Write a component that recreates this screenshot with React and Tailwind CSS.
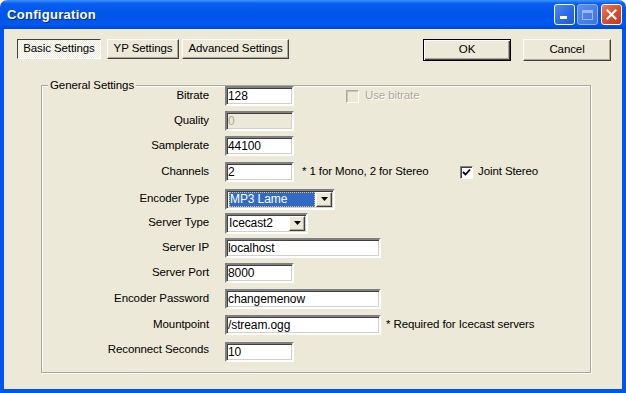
import React from 'react';

const font = { fontFamily: '"Liberation Sans", Arial, sans-serif' };

const raised =
  'border border-t-white border-l-white border-b-[#404040] border-r-[#404040] shadow-[inset_-1px_-1px_0_#aca899]';

const sunken =
  'border-2 border-t-[#808080] border-l-[#808080] border-b-white border-r-white shadow-[inset_1px_1px_0_#404040,inset_-1px_-1px_0_#d4d0c8]';

const TextBox = ({ value, width, disabled }) => (
  <div
    className={`${sunken} h-[20px] flex items-center pl-[1px] text-[12px] ${disabled ? 'bg-[#ece9d8] text-[#aca899]' : 'bg-white text-black'}`}
    style={{ width }}
  >
    <span className="leading-none">{value}</span>
  </div>
);

const Arrow = () => (
  <svg width="7" height="4" viewBox="0 0 7 4">
    <path d="M0 0h7L3.5 4z" fill="#000" />
  </svg>
);

const Select = ({ value, width, selected }) => (
  <div className={`${sunken} h-[21px] bg-white flex items-stretch p-[1px] text-[12px]`} style={{ width }}>
    <div className="flex-1 flex items-center pl-[1px]">
      {selected ? (
        <div className="h-full w-full bg-[#316ac5] text-white flex items-center pl-[1px] outline-1 outline-dotted outline-[#e8c35a] -outline-offset-1">
          {value}
        </div>
      ) : (
        <span>{value}</span>
      )}
    </div>
    <div className={`${raised} bg-[#ece9d8] w-[16px] ml-[1px] flex items-center justify-center`}>
      <Arrow />
    </div>
  </div>
);

const Row = ({ label, top, children, labelShift }) => (
  <div className="flex items-center h-[20px]" style={{ marginTop: top }}>
    <div className="w-[167px] text-right" style={labelShift ? { marginTop: labelShift } : undefined}>
      {label}
    </div>
    <div className="ml-[16px] flex items-center">{children}</div>
  </div>
);

const TitleButton = ({ kind }) => {
  if (kind === 'close') {
    return (
      <div className="w-[21px] h-[21px] rounded-[3px] border border-white bg-gradient-to-br from-[#e9775c] via-[#d9502f] to-[#c03a1c] flex items-center justify-center">
        <svg width="11" height="11" viewBox="0 0 11 11">
          <path d="M1.5 1.5l8 8M9.5 1.5l-8 8" stroke="#fff" strokeWidth="2.2" strokeLinecap="square" />
        </svg>
      </div>
    );
  }
  if (kind === 'max') {
    return (
      <div className="w-[21px] h-[21px] rounded-[3px] border border-[#8fb4f5] bg-gradient-to-br from-[#5a8ef0] to-[#3e72e3] flex items-center justify-center">
        <div className="w-[11px] h-[10px] border border-[#9cbaf2] border-t-[3px]" />
      </div>
    );
  }
  return (
    <div className="w-[21px] h-[21px] rounded-[3px] border border-white bg-gradient-to-br from-[#4a8cf6] via-[#2f6ce8] to-[#2258d8] flex items-end pb-[5px] pl-[5px]">
      <div className="w-[7px] h-[3px] bg-white" />
    </div>
  );
};

export default function App() {
  return (
    <div className="w-[626px] h-[393px] flex flex-col text-[11.5px] tracking-[-0.1px] text-black" style={font}>
      {/* title bar */}
      <div className="h-[29px] rounded-t-[7px] flex items-center pl-[7px] pr-[4px] bg-[linear-gradient(to_bottom,#3d95ff_0%,#0a5ff0_12%,#0055ea_45%,#0058f0_85%,#0046d5_100%)]">
        <span className="text-white font-bold text-[13px] tracking-[0.3px] [text-shadow:1px_1px_0_#0a2a80] mt-[1px]">
          Configuration
        </span>
        <div className="ml-auto flex items-center">
          <TitleButton kind="min" />
          <div className="ml-[2px]">
            <TitleButton kind="max" />
          </div>
          <div className="ml-[3px]">
            <TitleButton kind="close" />
          </div>
        </div>
      </div>

      {/* body */}
      <div className="flex-1 bg-[#ece9d8] border-l-[4px] border-r-[4px] border-b-[4px] border-[#0055ea] flex flex-col">
        <div className="flex items-start pt-[10px] pl-[13px]">
          <div className="flex">
            <div className="w-[84px] h-[20px] border border-t-[#404040] border-l-[#404040] border-b-white border-r-white bg-[repeating-conic-gradient(#fff_0%_25%,#ece9d8_0%_50%)] bg-[length:2px_2px] flex items-center justify-center">
              Basic Settings
            </div>
            <div className={`${raised} w-[72px] h-[20px] ml-[6px] flex items-center justify-center`}>YP Settings</div>
            <div className={`${raised} w-[107px] h-[20px] ml-[3px] flex items-center justify-center`}>
              Advanced Settings
            </div>
          </div>
          <div className="ml-[134px] w-[88px] h-[22px] border border-black shadow-[inset_1px_1px_0_#fff,inset_-1px_-1px_0_#404040,inset_-2px_-2px_0_#aca899] flex items-center justify-center">
            OK
          </div>
          <div className={`${raised} ml-[12px] w-[88px] h-[22px] flex items-center justify-center`}>Cancel</div>
        </div>

        {/* group box */}
        <div className="relative ml-[37px] mt-[24px] w-[550px] h-[288px] border border-[#aca899] shadow-[inset_1px_1px_0_#fff,1px_1px_0_#fff]">
          <span className="absolute -top-[8px] left-[6px] px-[2px] bg-[#ece9d8] leading-[14px]">General Settings</span>

          <Row label="Bitrate" top={0}>
            <TextBox value="128" width={69} />
            <div className="ml-[52px] flex items-center text-[#aca899] [text-shadow:1px_1px_0_#fff]">
              <div className="w-[13px] h-[13px] border border-t-[#aca899] border-l-[#aca899] border-b-white border-r-white bg-[#ece9d8] shadow-[inset_1px_1px_0_#cac6b5]" />
              <span className="ml-[6px]">Use bitrate</span>
            </div>
          </Row>
          <Row label="Quality" top={5}>
            <TextBox value="0" width={69} disabled />
          </Row>
          <Row label="Samplerate" top={5}>
            <TextBox value="44100" width={69} />
          </Row>
          <Row label="Channels" top={6}>
            <TextBox value="2" width={69} />
            <span className="ml-[8px] w-[158px]">* 1 for Mono, 2 for Stereo</span>
            <div className="w-[13px] h-[13px] bg-white border border-t-[#808080] border-l-[#808080] border-b-white border-r-white shadow-[inset_1px_1px_0_#404040] flex items-center justify-center">
              <svg width="9" height="9" viewBox="0 0 9 9">
                <path d="M1 4l2.5 2.5L8 1.5" stroke="#000" strokeWidth="1.8" fill="none" />
              </svg>
            </div>
            <span className="ml-[5px]">Joint Stereo</span>
          </Row>
          <Row label="Encoder Type" top={7}>
            <Select value="MP3 Lame" width={110} selected />
          </Row>
          <Row label="Server Type" top={4}>
            <Select value="Icecast2" width={83} />
          </Row>
          <Row label="Server IP" top={5}>
            <TextBox value="localhost" width={156} />
          </Row>
          <Row label="Server Port" top={5}>
            <TextBox value="8000" width={69} />
          </Row>
          <Row label="Encoder Password" top={6}>
            <TextBox value="changemenow" width={156} />
          </Row>
          <Row label="Mountpoint" top={6}>
            <TextBox value="/stream.ogg" width={156} />
            <span className="ml-[5px]">* Required for Icecast servers</span>
          </Row>
          <Row label="Reconnect Seconds" top={7} labelShift={-5}>
            <TextBox value="10" width={69} />
          </Row>
        </div>
      </div>
    </div>
  );
}
